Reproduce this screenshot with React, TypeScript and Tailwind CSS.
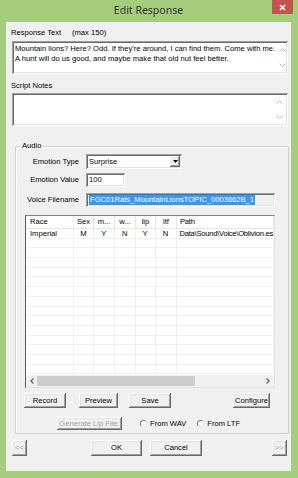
const raised =
  'bg-[#f0f0f0] shadow-[inset_-1px_-1px_#696969,inset_1px_1px_#ffffff,inset_-2px_-2px_#a0a0a0,inset_2px_2px_#e3e3e3]'
const sunken =
  'shadow-[inset_1px_1px_#a0a0a0,inset_-1px_-1px_#ffffff,inset_2px_2px_#696969,inset_-2px_-2px_#e3e3e3]'

const Chevron = ({ up }: { up?: boolean }) => (
  <svg width="7" height="5" viewBox="0 0 7 5">
    <path
      d={up ? 'M0.5 4.5 L3.5 1.5 L6.5 4.5' : 'M0.5 0.5 L3.5 3.5 L6.5 0.5'}
      fill="none"
      stroke="#b8b8b8"
      strokeWidth="1"
    />
  </svg>
)

const TextBox = ({ lines }: { lines: string[] }) => (
  <div className={`flex h-[33px] w-[276px] bg-white ${sunken}`}>
    <div className="flex-1 px-[3px] pt-[3px] text-[7.6px] leading-[10px] text-black">
      {lines.map((l) => (
        <div key={l} className="whitespace-nowrap">
          {l}
        </div>
      ))}
    </div>
    <div className="my-[2px] mr-[2px] flex w-[14px] flex-col items-center justify-between py-[4px]">
      <Chevron up />
      <Chevron />
    </div>
  </div>
)

const Btn = ({
  label,
  w,
  h = 'h-[15px]',
  disabled,
  className = '',
}: {
  label: string
  w: string
  h?: string
  disabled?: boolean
  className?: string
}) => (
  <div
    className={`flex items-center justify-center text-[7.6px] ${w} ${h} ${raised} ${
      disabled ? 'text-[#a0a0a0]' : 'text-black'
    } ${className}`}
  >
    {label}
  </div>
)

const Radio = ({ label, className = '' }: { label: string; className?: string }) => (
  <div className={`flex items-center ${className}`}>
    <div className="h-[7px] w-[7px] rounded-full border border-t-[#7a7a7a] border-l-[#7a7a7a] border-r-[#e3e3e3] border-b-[#e3e3e3] bg-white" />
    <span className="ml-[3px] text-[7.6px] font-medium text-black">{label}</span>
  </div>
)

const cols = [
  { name: 'Race', w: 'w-[48px]', align: 'justify-start pl-[4px]' },
  { name: 'Sex', w: 'w-[20px]', align: 'justify-center' },
  { name: 'm...', w: 'w-[21px]', align: 'justify-center' },
  { name: 'w...', w: 'w-[21px]', align: 'justify-center' },
  { name: 'lip', w: 'w-[20px]', align: 'justify-center' },
  { name: 'ltf', w: 'w-[21px]', align: 'justify-center' },
  { name: 'Path', w: 'flex-1', align: 'justify-start pl-[3px] tracking-[-0.25px]' },
]

// path is shown clipped at the list edge, as in the original dialog
const row = ['Imperial', 'M', 'Y', 'N', 'Y', 'N', 'Data\\Sound\\Voice\\Oblivion.es']

const ListView = () => (
  <div className="ml-[9px] mt-[8px] flex h-[173px] w-[250px] flex-col overflow-hidden border border-t-[#828282] border-l-[#5a5a5a] border-r-[#e3e3e3] border-b-[#e3e3e3] bg-white">
    <div className="flex h-[13px] border-b border-[#e5e5e5]">
      {cols.map((c) => (
        <div
          key={c.name}
          className={`flex items-center border-r border-[#e5e5e5] text-[7.6px] text-black ${c.w} ${c.align}`}
        >
          {c.name}
        </div>
      ))}
    </div>
    <div className="flex-1">
      {Array.from({ length: 15 }).map((_, i) => (
        <div key={i} className="flex h-[9.7px] border-b border-[#f0f0f0]">
          {cols.map((c, j) => (
            <div
              key={c.name}
              className={`flex items-center whitespace-nowrap border-r border-[#f0f0f0] text-[7.6px] leading-[9px] text-black ${c.w} ${c.align}`}
            >
              {i === 0 ? row[j] : ''}
            </div>
          ))}
        </div>
      ))}
    </div>
    <div className="flex h-[12px] items-center bg-[#f0f0f0]">
      <div className="flex w-[11px] justify-center">
        <svg width="4" height="6" viewBox="0 0 4 6">
          <path d="M3.5 0.5 L0.8 3 L3.5 5.5" fill="none" stroke="#606060" strokeWidth="1.2" />
        </svg>
      </div>
      <div className="h-[10px] w-[158px] bg-[#cdcdcd]" />
      <div className="flex-1" />
      <div className="flex w-[12px] justify-center">
        <svg width="4" height="6" viewBox="0 0 4 6">
          <path d="M0.5 0.5 L3.2 3 L0.5 5.5" fill="none" stroke="#606060" strokeWidth="1.2" />
        </svg>
      </div>
    </div>
  </div>
)

const Field = ({ label, top, children }: { label: string; top: string; children: React.ReactNode }) => (
  <div className={`flex items-center ${top}`}>
    <div className="w-[63px] text-right text-[7.6px] text-black">{label}</div>
    <div className="ml-[7px]">{children}</div>
  </div>
)

export default function App() {
  return (
    <div className="flex h-[478px] w-[298px] flex-col bg-[#a4cd7c] pb-[7px] pl-[6px] pr-[7px] font-['Liberation_Sans',Arial,sans-serif]">
      <div className="relative flex h-[22px] items-center justify-center">
        <span className="font-['Noto_Sans',sans-serif] text-[10.5px] text-[#333333]">Edit Response</span>
        <div className="absolute right-[-2px] top-0 flex h-[14px] w-[21px] items-center justify-center bg-[#c75050]">
          <svg width="7" height="7" viewBox="0 0 7 7">
            <path d="M1 1 L6 6 M6 1 L1 6" stroke="#ffffff" strokeWidth="1.6" />
          </svg>
        </div>
      </div>
      <div className="flex flex-1 flex-col bg-[#f0f0f0] pl-[6px] pr-[3px]">
        <div className="ml-[-1px] mt-[6px] flex h-[10px] items-center text-[7.6px] text-black">
          <span className="w-[61px]">Response Text</span>
          <span>(max 150)</span>
        </div>
        <div className="mt-[3px]">
          <TextBox
            lines={[
              "Mountain lions? Here? Odd. If they're around, I can find them. Come with me.",
              'A hunt will do us good, and maybe make that old nut feel better.',
            ]}
          />
        </div>
        <div className="ml-[-1px] mt-[7px] flex h-[10px] items-center text-[7.6px] text-black">
          Script Notes
        </div>
        <div className="mt-[2px]">
          <TextBox lines={[]} />
        </div>

        <div className="relative ml-[3px] mt-[20px] flex h-[288px] w-[274px] flex-col rounded-[2px] border border-[#d0d0d0] shadow-[inset_1px_1px_#ffffff]">
          <span className="absolute left-[4px] top-[-6px] bg-[#f0f0f0] px-[2px] text-[7.6px] leading-[10px] text-black">
            Audio
          </span>
          <Field label="Emotion Type" top="mt-[7px]">
            <div className={`flex h-[15px] w-[96px] items-center bg-white ${sunken}`}>
              <span className="flex-1 pl-[3px] text-[7.6px] text-black">Surprise</span>
              <div className={`mr-[2px] flex h-[11px] w-[10px] items-center justify-center ${raised}`}>
                <svg width="5" height="3" viewBox="0 0 5 3">
                  <path d="M0 0 H5 L2.5 3 Z" fill="#000000" />
                </svg>
              </div>
            </div>
          </Field>
          <Field label="Emotion Value" top="mt-[4px]">
            <div className={`flex h-[14px] w-[39px] items-center bg-white pl-[3px] text-[7.6px] text-black ${sunken}`}>
              100
            </div>
          </Field>
          <Field label="Voice Filename" top="mt-[6px]">
            <div className={`flex h-[14px] w-[189px] items-center bg-[#f0f0f0] pl-[3px] ${sunken}`}>
              <span className="bg-[#3399ff] px-[1px] text-[7.6px] leading-[10px] text-white">
                FGC01Rats_MountainLionsTOPIC_0003662B_1
              </span>
            </div>
          </Field>
          <ListView />
          <div className="ml-[8px] mt-[5px] flex">
            <Btn label="Record" w="w-[42px]" />
            <Btn label="Preview" w="w-[39px]" className="ml-[13px]" />
            <Btn label="Save" w="w-[42px]" className="ml-[11px]" />
            <Btn label="Configure" w="w-[37px]" className="ml-[62px]" />
          </div>
          <div className="ml-[41px] mt-[9px] flex items-center">
            <Btn label="Generate Lip File:" w="w-[65px]" h="h-[13px]" disabled />
            <Radio label="From WAV" className="ml-[18px]" />
            <Radio label="From LTF" className="ml-[11px]" />
          </div>
        </div>

        <div className="mt-[6px] flex">
          <Btn label="<<" w="w-[15px]" h="h-[16px]" disabled />
          <Btn label="OK" w="w-[51px]" h="h-[16px]" className="ml-[64px]" />
          <Btn label="Cancel" w="w-[52px]" h="h-[16px]" className="ml-[8px]" />
          <Btn label=">>" w="w-[15px]" h="h-[16px]" disabled className="ml-[70px]" />
        </div>
      </div>
    </div>
  )
}
